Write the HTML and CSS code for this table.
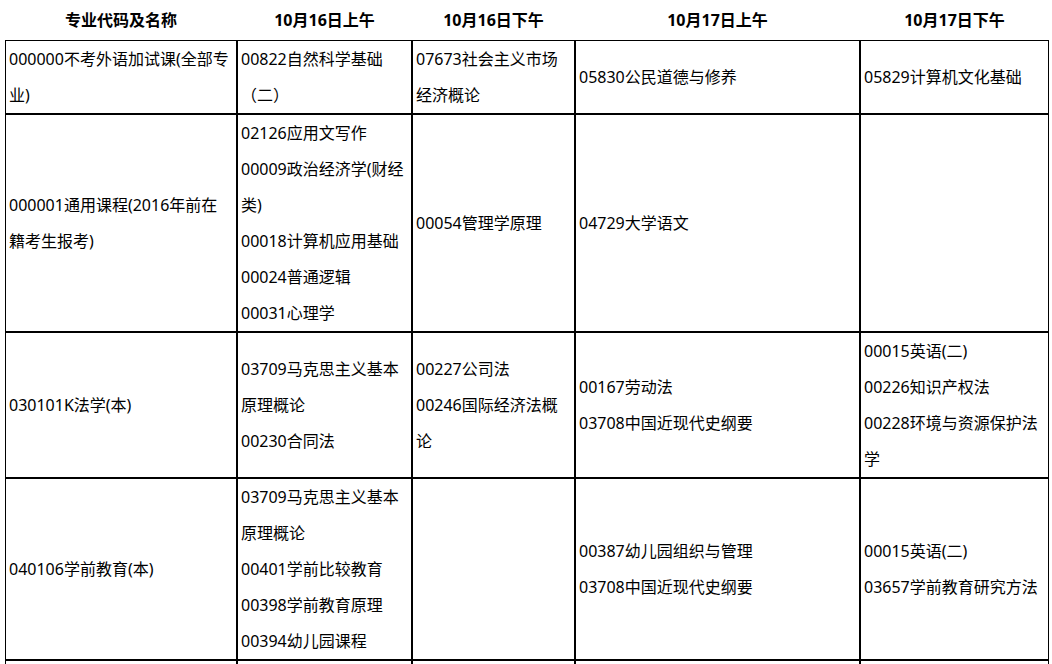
FILE: index.html
```html
<!DOCTYPE html>
<html lang="zh-CN">
<head>
<meta charset="utf-8">
<title>考试安排</title>
<link rel="stylesheet" href="styles.css">
</head>
<body>
<table class="schedule">
  <colgroup>
    <col class="c1"><col class="c2"><col class="c3"><col class="c4"><col class="c5">
  </colgroup>
  <thead>
    <tr>
      <th>专业代码及名称</th>
      <th>10月16日上午</th>
      <th>10月16日下午</th>
      <th>10月17日上午</th>
      <th>10月17日下午</th>
    </tr>
  </thead>
  <tbody>
    <tr>
      <td>000000不考外语加试课(全部专<br>业)</td>
      <td>00822自然科学基础<br>（二）</td>
      <td>07673社会主义市场<br>经济概论</td>
      <td>05830公民道德与修养</td>
      <td>05829计算机文化基础</td>
    </tr>
    <tr>
      <td>000001通用课程(2016年前在<br>籍考生报考)</td>
      <td>02126应用文写作<br>00009政治经济学(财经<br>类)<br>00018计算机应用基础<br>00024普通逻辑<br>00031心理学</td>
      <td>00054管理学原理</td>
      <td>04729大学语文</td>
      <td></td>
    </tr>
    <tr>
      <td>030101K法学(本)</td>
      <td>03709马克思主义基本<br>原理概论<br>00230合同法</td>
      <td>00227公司法<br>00246国际经济法概<br>论</td>
      <td>00167劳动法<br>03708中国近现代史纲要</td>
      <td>00015英语(二)<br>00226知识产权法<br>00228环境与资源保护法<br>学</td>
    </tr>
    <tr>
      <td>040106学前教育(本)</td>
      <td>03709马克思主义基本<br>原理概论<br>00401学前比较教育<br>00398学前教育原理<br>00394幼儿园课程</td>
      <td></td>
      <td>00387幼儿园组织与管理<br>03708中国近现代史纲要</td>
      <td>00015英语(二)<br>03657学前教育研究方法</td>
    </tr>
    <tr class="more">
      <td></td><td></td><td></td><td></td><td></td>
    </tr>
  </tbody>
</table>
</body>
</html>
```

FILE: styles.css
```css
html, body {
  margin: 0;
  padding: 0;
  background: #ffffff;
}

body {
  padding-left: 5px;
  font-family: "Noto Sans", "Noto Sans CJK SC", sans-serif;
  font-size: 16px;
  color: #000000;
}

.schedule {
  border-collapse: separate;
  border-spacing: 0;
  table-layout: fixed;
  width: 1044px;
}

.c1 { width: 232px; }
.c2 { width: 175px; }
.c3 { width: 163px; }
.c4 { width: 285px; }
.c5 { width: 189px; }

.schedule th {
  height: 40px;
  padding: 0;
  font-weight: bold;
  text-align: center;
  vertical-align: middle;
  line-height: 20px;
  border: none;
}

.schedule td {
  border: 1px solid #000000;
  padding: 0 2px 0 3px;
  line-height: 36px;
  vertical-align: middle;
  text-align: left;
  white-space: nowrap;
  overflow: hidden;
}

.schedule .more td {
  height: 120px;
}
```
